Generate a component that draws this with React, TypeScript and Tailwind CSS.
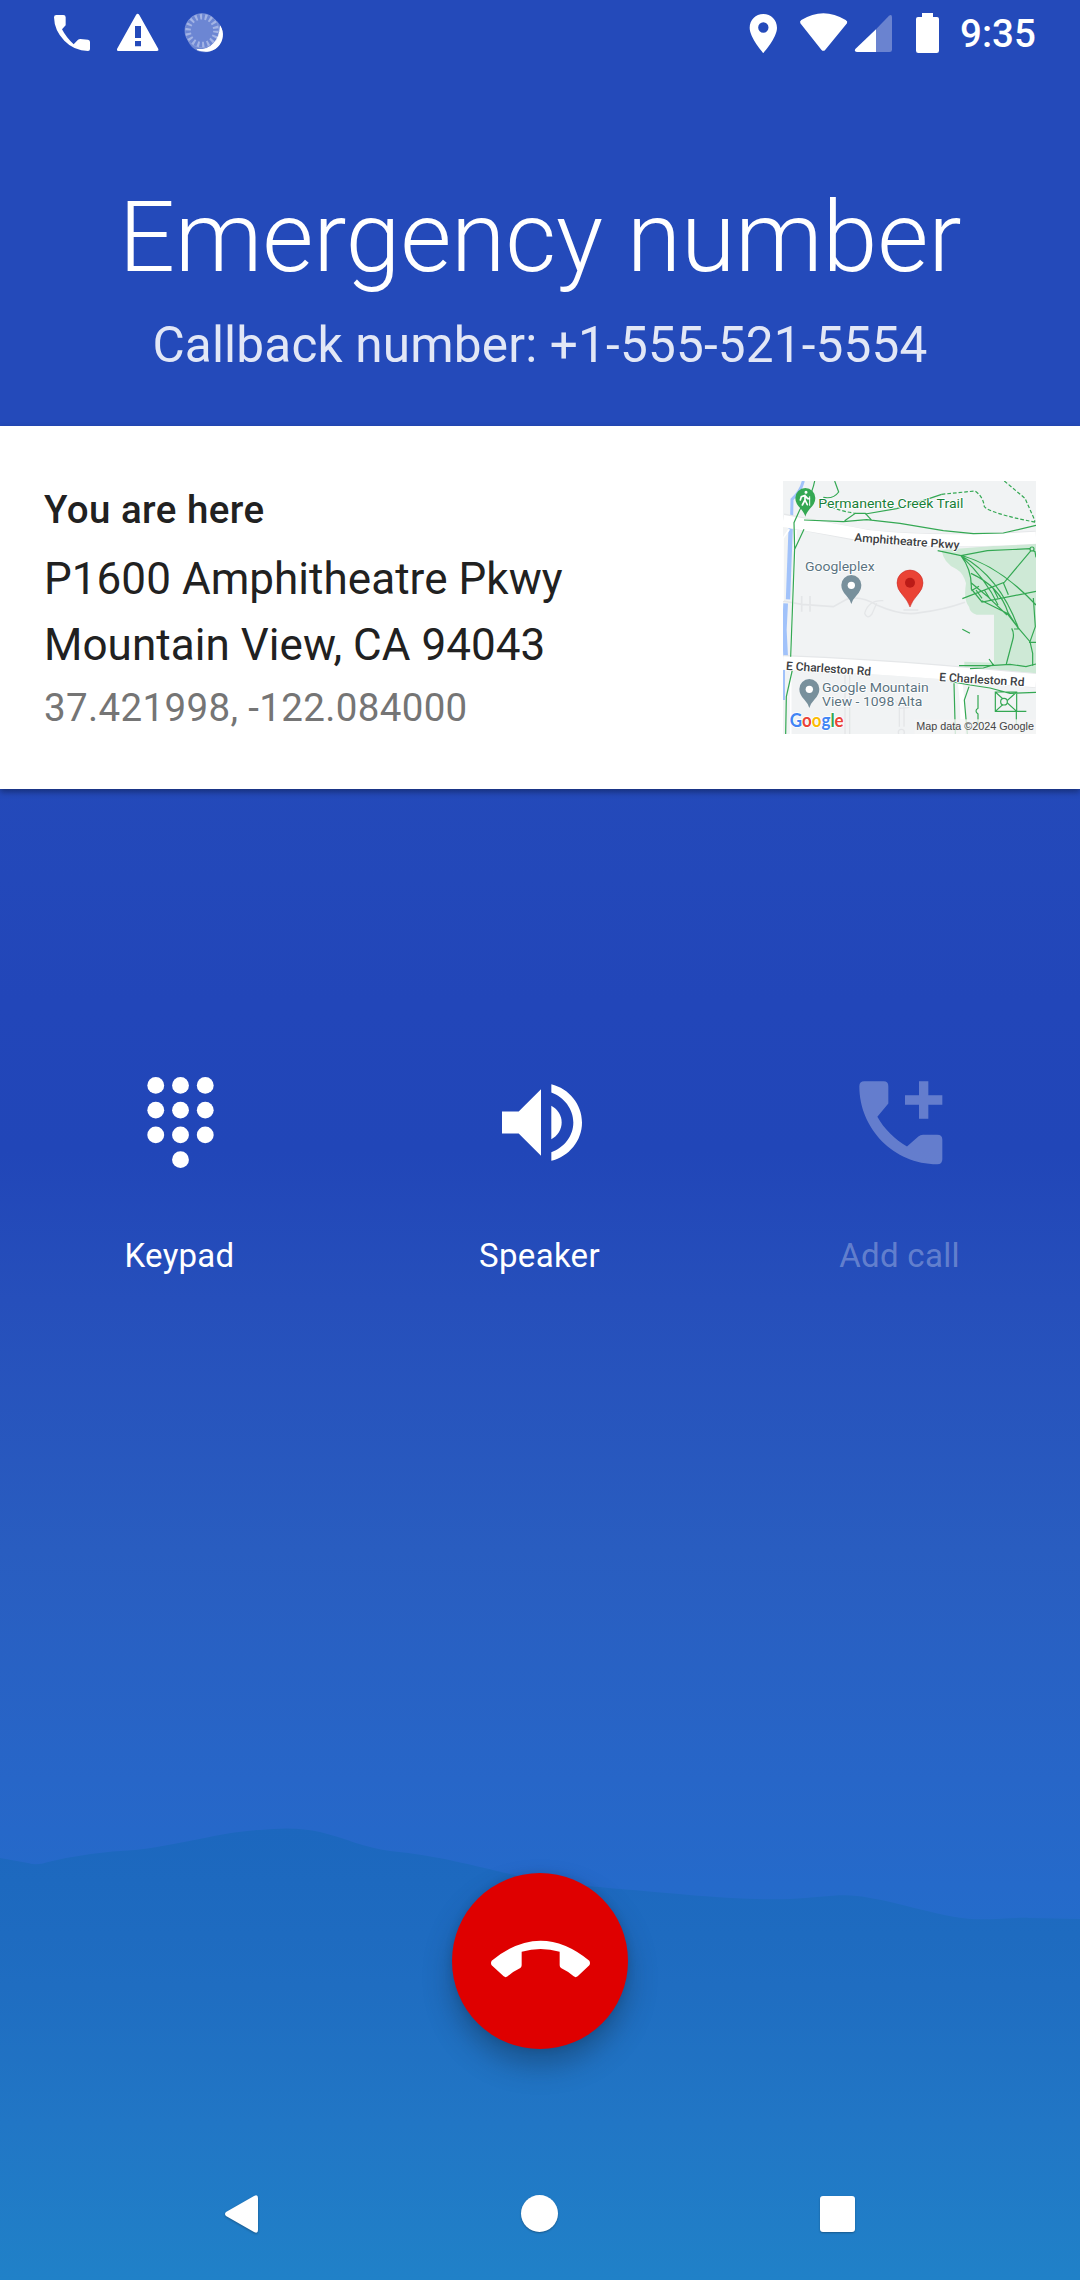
const R = "font-['Roboto',sans-serif]";

function StatusBar() {
  return (
    <header className="flex h-[66px] w-full items-center text-white">
      <svg className="h-[66px] w-[240px]" viewBox="0 0 720 198" fill="currentColor">
        <path d="M169 45H190Q197 45 197 52V76L186 88Q199 113 221 133L234 119Q237 117 241 117L264 119Q270 120 270 126V147Q270 153 264 153Q222 152 193 122Q163 92 162 52Q162 45 169 45Z" />
        <path fillRule="evenodd" d="M408 45Q413 38 418 45L475 147Q477 153 471 153H355Q349 153 351 147ZM405 78V114H423V78ZM405 123V139H423V123Z" />
        <circle cx="614" cy="103" r="54" fill="#6f88d2" />
        <path d="M660 76A51 51 0 0 1 588 146Q625 154 646 128Q664 105 660 76Z" />
        <circle cx="606" cy="92" r="51" fill="#6c86d3" />
        <circle cx="606" cy="92" r="42" fill="none" stroke="#a3b4e5" strokeWidth="17" strokeDasharray="6.5 8.16" />
        <circle cx="606" cy="92" r="51" fill="none" stroke="#8ea2dd" strokeWidth="2" />
        <path d="M661 80Q671 110 648 135Q625 158 592 149Q622 152 642 130Q660 109 661 80Z" stroke="#fff" strokeWidth="3" />
      </svg>
      <div className="flex-1" />
      <svg className="h-[66px] w-[240px]" viewBox="0 0 720 198" fill="currentColor">
        <path fillRule="evenodd" d="M130 42C153 42 171 60 171 83C171 113 130 159 130 159S89 113 89 83C89 60 107 42 130 42ZM130 67A15 15 0 1 0 130 98A15 15 0 1 0 130 67Z" />
        <path d="M241 70Q238 64 244 60Q310 19 377 60Q384 64 381 70L316 149Q310 156 304 149Z" />
        <path fill="#6a83d0" d="M468 88L507 47Q516 41 516 52V149Q516 156 509 156H468Z" />
        <path d="M468 88V156H412Q401 155 406 147Z" />
        <path d="M606 39H639V51H651Q657 51 657 57V152Q657 159 650 159H595Q588 159 588 152V57Q588 51 594 51H606Z" />
      </svg>
      <span className="w-[120px] pt-[2px] text-[38.5px] font-medium leading-[70px]">9:35</span>
    </header>
  );
}

const green = "#34a853";

function MapView() {
  return (
    <svg className="h-[253px] w-[253px] shrink-0" viewBox="39 33 759 759">
      <rect x="39" y="33" width="759" height="759" fill="#f1f3f4" />
      <path d="M515 240L798 218V610L583 590V575L672 578V434H620Q600 428 597 410Q580 390 588 340Q580 310 560 298Q520 280 515 240Z" fill="#cee9d6" />
      <g fill="none" stroke="#a1c2fa">
        <path d="M100 33Q92 65 66 88L65 142" strokeWidth="9" />
        <path d="M62 175L54 388" strokeWidth="13" />
        <path d="M47 400L43 480L47 560" strokeWidth="14" />
        <path d="M41 600V690" strokeWidth="8" />
      </g>
      <g fill="none" stroke="#e4e6e8" strokeWidth="4">
        <path d="M39 393L95 403M95 378V425M120 378V425M95 403L190 410L230 388Q270 375 320 405Q400 440 450 428Q520 420 585 397" strokeWidth="5" />
        <path d="M340 392Q295 390 284 430Q292 450 306 432L320 400M400 420H445" />
        <path d="M225 615V792M239 615V792M388 690V770M402 690V770M376 692L390 715L418 712" />
      </g>
      <circle cx="394" cy="787" r="9" fill="none" stroke="#e4e6e8" strokeWidth="4" />
      <path d="M58 178L39 205V393M78 180L62 560V792" fill="none" stroke="#fff" strokeWidth="5" />
      <path d="M39 150Q190 180 300 200Q500 220 798 202" fill="none" stroke="#e5e7e9" strokeWidth="40" />
      <path d="M39 153Q190 178 300 199Q500 221 798 203" fill="none" stroke="#fff" strokeWidth="36" />
      <path d="M39 577Q290 587 520 606L798 632" fill="none" stroke="#e5e7e9" strokeWidth="44" />
      <path d="M39 579Q290 589 520 608L798 632" fill="none" stroke="#fff" strokeWidth="40" />
      <path d="M567 620Q580 690 578 792" fill="none" stroke="#fff" strokeWidth="14" />
      <g fill="none" stroke={green} strokeWidth="3.6">
        <path d="M134 33Q128 65 112 90L90 118L72 158L74 235L62 560M102 178L73 240M67 600L49 680L47 792" />
        <path d="M102 150L220 155L290 149L390 160L520 182L610 191L700 189L798 166M224 152L256 130H286L306 152" />
        <path d="M194 33L206 66Q190 88 160 82M286 132L380 116L450 95L515 73" />
        <path d="M515 73L615 63Q640 80 643 110Q660 130 798 157" strokeDasharray="11 6" />
        <path d="M155 95Q190 120 256 130" strokeDasharray="11 6" />
        <path d="M703 33L765 85L794 150V157" strokeDasharray="11 6" />
        <path d="M503 242L573 257L652 242L780 236L795 245L798 262M576 254M786 238L703 337L577 386M573 257Q606 300 604 357L636 396L798 364M573 257Q650 330 684 405M573 257Q690 320 746 477M580 258Q690 290 798 405M603 310Q690 350 714 428L746 477M603 338L650 377L711 435M604 362L627 349M618 360L636 385M643 360L662 390M667 350L684 384M700 338L715 374M636 392L711 430L746 475L780 515L788 550V587M790 384L796 470L780 515M725 475Q734 490 728 510L709 582M732 477H750M777 517H798" />
        <path d="M567 587H660L720 583L768 590L798 582M657 567L670 585L640 594L600 596M577 478L600 490" />
        <path d="M552 640L556 792M597 650L583 690L592 792M540 634L600 645L660 654L720 670L798 667M676 666H740V724H676ZM676 666L740 724M740 666L676 724M740 724H769M739 724V764M624 675V715Q612 722 624 732V765" />
        <circle cx="702" cy="695" r="10" fill="#f1f3f4" />
        <circle cx="786" cy="237" r="6" fill="#cee9d6" />
      </g>
      <g fontFamily="Roboto, sans-serif" paintOrder="stroke" stroke="#fff" strokeWidth="5" strokeLinejoin="round">
        <text x="145" y="113" fontSize="40" fill="#188038" textLength="435" lengthAdjust="spacingAndGlyphs">Permanente Creek Trail</text>
        <text transform="translate(252 214) rotate(4.2)" fontSize="35" fontWeight="500" fill="#3c4043" textLength="316" lengthAdjust="spacingAndGlyphs">Amphitheatre Pkwy</text>
        <text x="105" y="303" fontSize="40" fill="#5b737f" textLength="209" lengthAdjust="spacingAndGlyphs">Googleplex</text>
        <text transform="translate(47 599) rotate(4)" fontSize="35" fontWeight="500" fill="#3c4043" textLength="256" lengthAdjust="spacingAndGlyphs">E Charleston Rd</text>
        <text transform="translate(507 633) rotate(3.5)" fontSize="35" fontWeight="500" fill="#3c4043" textLength="256" lengthAdjust="spacingAndGlyphs">E Charleston Rd</text>
        <text x="156" y="666" fontSize="40" fill="#5b737f" textLength="320" lengthAdjust="spacingAndGlyphs">Google Mountain</text>
        <text x="156" y="708" fontSize="40" fill="#5b737f" textLength="301" lengthAdjust="spacingAndGlyphs">View - 1098 Alta</text>
      </g>
      <path d="M106 54A30 30 0 0 1 136 84Q136 101 119 117Q108 131 106 140Q104 131 93 117Q76 101 76 84A30 30 0 0 1 106 54Z" fill="#34a853" />
      <g fill="none" stroke="#fff" strokeWidth="4" strokeLinecap="round">
        <path d="M105 76V90L97 105M105 90L112 104M104 77L94 80L91 90M107 79L113 86H118" strokeWidth="5" />
        <path d="M119 80V106" strokeWidth="3" />
        <circle cx="108" cy="67" r="2.5" fill="#fff" />
      </g>
      {[[244, 315], [118, 627]].map(([x, y]) => (
        <g key={x} transform={`translate(${x} ${y})`}>
          <path d="M0 0A30 30 0 0 1 30 30Q30 46 16 61Q3 75 0 87Q-3 75-16 61Q-30 46-30 30A30 30 0 0 1 0 0Z" fill="#78909c" />
          <circle cy="31" r="11" fill="#fff" />
        </g>
      ))}
      <path d="M420 300A39 39 0 0 1 459 339Q459 357 443 374Q426 393 420 411Q414 393 397 374Q381 357 381 339A39 39 0 0 1 420 300Z" fill="#ea4335" stroke="#c5221f" strokeWidth="1.5" />
      <circle cx="420" cy="338" r="15" fill="#b31412" opacity="0.85" />
      <rect x="433" y="748" width="365" height="44" fill="#f5f5f5" opacity="0.8" />
      <text x="439" y="780" fontFamily="Liberation Sans, sans-serif" fontSize="32" fill="#444" textLength="353" lengthAdjust="spacingAndGlyphs">Map data ©2024 Google</text>
      <text x="59" y="771" fontFamily="Lato, sans-serif" fontSize="54" fontWeight="700" stroke="#fff" strokeWidth="5" paintOrder="stroke" textLength="162" lengthAdjust="spacingAndGlyphs">
        <tspan fill="#4285f4">G</tspan><tspan fill="#ea4335">o</tspan><tspan fill="#fbbc04">o</tspan><tspan fill="#4285f4">g</tspan><tspan fill="#34a853">l</tspan><tspan fill="#ea4335">e</tspan>
      </text>
    </svg>
  );
}

function KeypadIcon() {
  return (
    <svg className="h-[99px] w-[99px]" viewBox="0 0 24 24" fill="currentColor">
      {[[6, 3], [12, 3], [18, 3], [6, 9], [12, 9], [18, 9], [6, 15], [12, 15], [18, 15], [12, 21]].map(([x, y]) => (
        <circle key={`${x}-${y}`} cx={x} cy={y} r="2.04" />
      ))}
    </svg>
  );
}

function SpeakerIcon() {
  return (
    <svg className="h-[99px] w-[99px]" viewBox="93 68.5 297 297" fill="currentColor">
      <path d="M126 184H176L243 117V317L176 250H126Z" />
      <path d="M274 167C293 177 305 196 305 217S293 257 274 267Z" />
      <path d="M274 102C327 115 366 162 366 217S327 319 274 332V306C312 293 340 258 340 217S312 141 274 127Z" />
    </svg>
  );
}

function AddCallIcon() {
  return (
    <svg className="h-[99px] w-[99px]" viewBox="1172 68.5 297 297" fill="currentColor">
      <path d="M1212 93H1270Q1284 93 1284 108V160L1251 200C1270 235 1305 270 1340 289L1374 259Q1380 254 1388 254H1431Q1446 254 1446 269V327Q1446 342 1431 342C1300 342 1197 235 1197 108Q1197 93 1212 93Z" />
      <path d="M1376 93H1404V135H1446V164H1404V206H1376V164H1334V135H1376Z" />
    </svg>
  );
}

const actions = [
  { label: "Keypad", Icon: KeypadIcon, tone: "text-white" },
  { label: "Speaker", Icon: SpeakerIcon, tone: "text-white" },
  { label: "Add call", Icon: AddCallIcon, tone: "text-white/30" },
];

function Wallpaper() {
  return (
    <svg className="absolute inset-0 h-[2280px] w-[1080px]" viewBox="0 0 1080 2280">
      <defs>
        <linearGradient id="sky" gradientUnits="userSpaceOnUse" x1="0" y1="0" x2="0" y2="2280">
          <stop offset="0" stopColor="#244aba" />
          <stop offset="0.33" stopColor="#244aba" />
          <stop offset="0.44" stopColor="#2246b9" />
          <stop offset="0.505" stopColor="#2146b8" />
          <stop offset="0.57" stopColor="#264fbb" />
          <stop offset="0.68" stopColor="#295dc0" />
          <stop offset="0.78" stopColor="#2766c8" />
          <stop offset="0.85" stopColor="#246ccb" />
        </linearGradient>
        <linearGradient id="hills" gradientUnits="userSpaceOnUse" x1="0" y1="1828" x2="0" y2="2280">
          <stop offset="0" stopColor="#1c67be" />
          <stop offset="0.35" stopColor="#1f6dc1" />
          <stop offset="0.65" stopColor="#2176c5" />
          <stop offset="1" stopColor="#2081c8" />
        </linearGradient>
      </defs>
      <rect width="1080" height="2280" fill="url(#sky)" />
      <path d="M0 1858L28 1863Q37 1866 48 1862Q90 1852 135 1850C185 1844 225 1831 260 1830Q295 1826 320 1832C345 1838 365 1848 390 1851C440 1856 475 1866 510 1874C550 1884 590 1886 620 1889C680 1894 745 1901 790 1899C825 1897 845 1892 870 1898C900 1903 930 1913 955 1917C980 1922 1010 1917 1030 1918L1080 1919V2280H0Z" fill="url(#hills)" />
    </svg>
  );
}

export default function App() {
  return (
    <div className={`relative h-[2280px] w-[1080px] overflow-hidden ${R}`}>
      <Wallpaper />
      <div className="relative flex h-full flex-col">
        <StatusBar />
        <section className="flex h-[360px] flex-col items-center pt-[113px] text-white">
          <h1 className="text-[99px] font-light leading-[116px] tracking-[-0.25px]">Emergency number</h1>
          <p className="mt-[21px] text-[49.5px] leading-[58px] tracking-[0.18px] text-white/87">Callback number: +1-555-521-5554</p>
        </section>
        <section className="flex h-[363px] items-center justify-between bg-white px-[44px] shadow-[0_3px_6px_rgba(0,0,0,0.35)]">
          <div className="flex flex-col pt-[4px] text-[#212121]">
            <strong className="text-[38.5px] font-medium leading-[45px] tracking-[0.45px]">You are here</strong>
            <p className="mt-[14px] w-[640px] text-[44px] leading-[66px] tracking-[0.05px]">P1600 Amphitheatre Pkwy<br />Mountain View, CA 94043</p>
            <p className="mt-[5px] text-[38.5px] leading-[50px] tracking-[0.35px] text-[#757575]">37.421998, -122.084000</p>
          </div>
          <MapView />
        </section>
        <section className="mt-[284px] grid grid-cols-3">
          {actions.map(({ label, Icon, tone }) => (
            <button key={label} className={`flex flex-col items-center ${tone}`}>
              <Icon />
              <span className="mt-[64px] mr-[1px] text-[33px] leading-[39px] tracking-[0.3px]">{label}</span>
            </button>
          ))}
        </section>
        <div className="mt-auto flex h-[176px] justify-center">
          <button className="flex h-[176px] w-[176px] items-center justify-center rounded-full bg-[#df0000] shadow-[0_16px_28px_rgba(20,50,80,0.45),0_0_8px_rgba(0,0,0,0.12)]">
            <svg className="h-[176px] w-[176px]" viewBox="96 99 528 528" fill="#fff">
              <path d="M215 362Q362 242 508 362Q512 369 508 376L473 409Q467 414 461 409Q446 395 423 384Q419 381 419 376V335Q362 319 305 335V376Q305 381 301 384Q278 395 263 409Q257 414 251 409L215 376Q211 369 215 362Z" />
            </svg>
          </button>
        </div>
        <nav className="mt-[82px] flex h-[149px] items-center justify-center pt-[16px]">
          <div className="flex w-[630px] items-center justify-between">
            <svg className="h-[38px] w-[33px] drop-shadow-[0_1px_1px_rgba(0,0,0,0.3)]" viewBox="0 0 33 38" fill="#fff"><path d="M1 17Q-1 19 1 21L29 37Q33 39 33 35V3Q33-1 29 1Z" /></svg>
            <span className="h-[37px] w-[37px] rounded-full bg-white shadow-[0_1px_2px_rgba(0,0,0,0.3)]" />
            <span className="h-[36px] w-[35px] rounded-[3px] bg-white shadow-[0_1px_2px_rgba(0,0,0,0.3)]" />
          </div>
        </nav>
      </div>
    </div>
  );
}
